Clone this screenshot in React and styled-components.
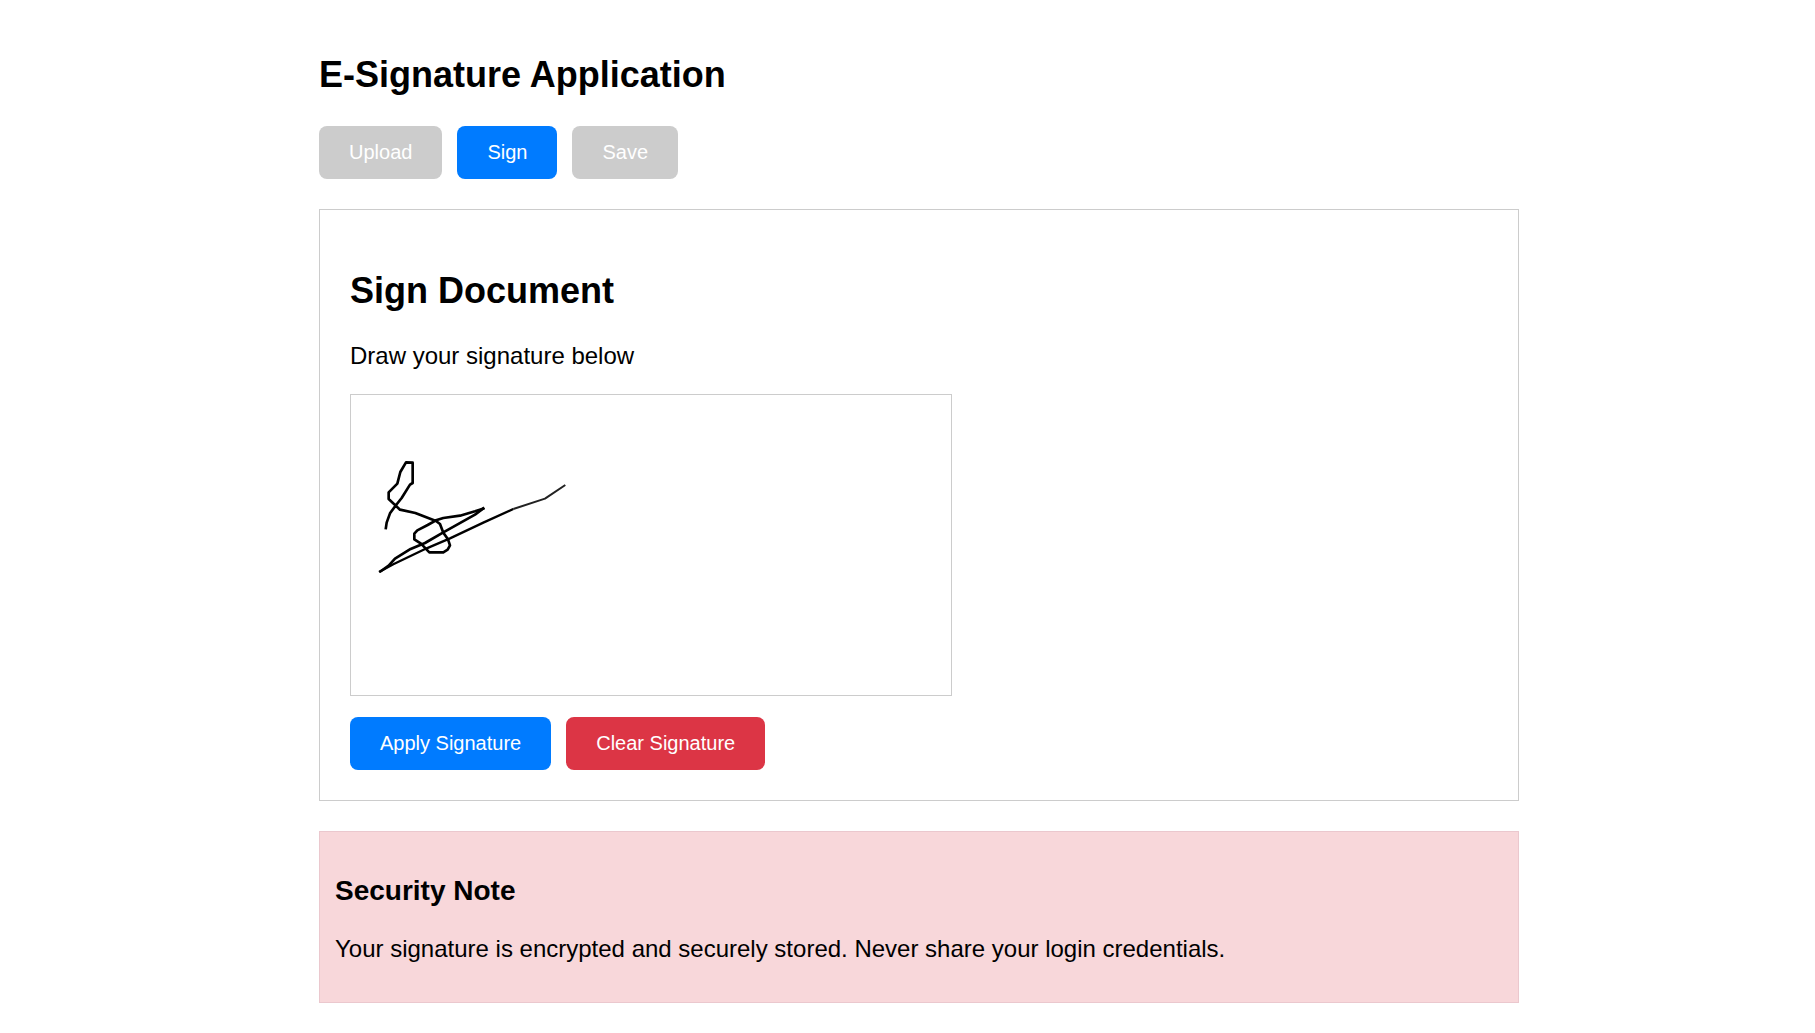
import React, { useState } from 'react';
import styled, { createGlobalStyle } from 'styled-components';

const GlobalStyle = createGlobalStyle`
  *, *::before, *::after { box-sizing: border-box; }
  body {
    margin: 0;
    background: #fff;
    color: #000;
    font-family: "Liberation Sans", Arial, sans-serif;
    font-size: 24px;
    line-height: 28px;
  }
`;

const Page = styled.main`
  padding: 54px 0 30px 23px;
`;

const Container = styled.div`
  display: flex;
  flex-direction: column;
  gap: 30px;
  max-width: 1200px;
  margin: 0 auto;
`;

const Title = styled.h2`
  margin: 0;
  font-size: 36px;
  line-height: 42px;
`;

const Text = styled.p`
  margin: 0;
`;

const ButtonRow = styled.div`
  display: flex;
  flex-wrap: wrap;
  gap: 15px;
`;

const colors = { primary: '#007bff', danger: '#dc3545', muted: '#ccc' };

const Button = styled.button`
  padding: 15px 30px;
  border: 0;
  border-radius: 8px;
  background: ${({ $tone }) => colors[$tone]};
  color: #fff;
  font-family: inherit;
  font-size: 20px;
  line-height: 23px;
  cursor: pointer;
`;

const Card = styled.section`
  padding: 60px 30px 30px;
  border: 1px solid #ccc;
`;

const Instructions = styled(Text)`
  margin: 30px 0 24px;
`;

const Pad = styled.div`
  width: 602px;
  max-width: 100%;
  margin-bottom: 21px;
  border: 1px solid #ccc;

  svg {
    display: block;
    width: 100%;
    height: auto;
  }
`;

const Note = styled.aside`
  padding: 43px 15px 39px;
  border: 1px solid #ebc8ce;
  background: #f8d7da;
`;

const NoteTitle = styled.h3`
  margin: 0 0 28px;
  font-size: 28px;
  line-height: 32px;
`;

function Signature() {
  return (
    <svg viewBox="0 0 600 300" role="img" aria-label="Signature">
      <g transform="translate(9 45) scale(0.3333)" fill="none" stroke="#000" strokeLinejoin="round">
        <path
          strokeWidth="8"
          d="M77 268 L80 248 L90 220 L106 198 L125 174 L150 134 L158 129 L158 68 L138 67 L121 96 L112 131 L86 157 L86 177 L120 209 L166 219 L228 243 L240 252 L250 278 L264 298 L270 316 L263 329 L250 337 L208 337 L183 311 L163 298 L163 281 L172 271 L203 255 L228 241 L250 234 L300 227 L345 214 L373 205"
        />
        <path strokeWidth="8" d="M373 203 L345 224 L250 277 L195 309 L152 327 L105 356 L86 377 L59 396" />
        <path strokeWidth="7" d="M57 396 L100 373 L200 325 L270 295 L370 248 L460 207" />
        <path strokeWidth="6" stroke="#222" d="M460 207 L555 176 L616 135" />
      </g>
    </svg>
  );
}

export default function App() {
  const [step, setStep] = useState('Sign');
  const [signed, setSigned] = useState(true);

  return (
    <>
      <GlobalStyle />
      <Page>
        <Container>
          <Title>E-Signature Application</Title>
          <ButtonRow>
            {['Upload', 'Sign', 'Save'].map((name) => (
              <Button
                key={name}
                type="button"
                $tone={step === name ? 'primary' : 'muted'}
                onClick={() => setStep(name)}
              >
                {name}
              </Button>
            ))}
          </ButtonRow>
          <Card>
            <Title>Sign Document</Title>
            <Instructions>Draw your signature below</Instructions>
            <Pad>
              {signed ? <Signature /> : <svg viewBox="0 0 600 300" />}
            </Pad>
            <ButtonRow>
              <Button type="button" $tone="primary">Apply Signature</Button>
              <Button type="button" $tone="danger" onClick={() => setSigned(false)}>
                Clear Signature
              </Button>
            </ButtonRow>
          </Card>
          <Note>
            <NoteTitle>Security Note</NoteTitle>
            <Text>Your signature is encrypted and securely stored. Never share your login credentials.</Text>
          </Note>
        </Container>
      </Page>
    </>
  );
}
